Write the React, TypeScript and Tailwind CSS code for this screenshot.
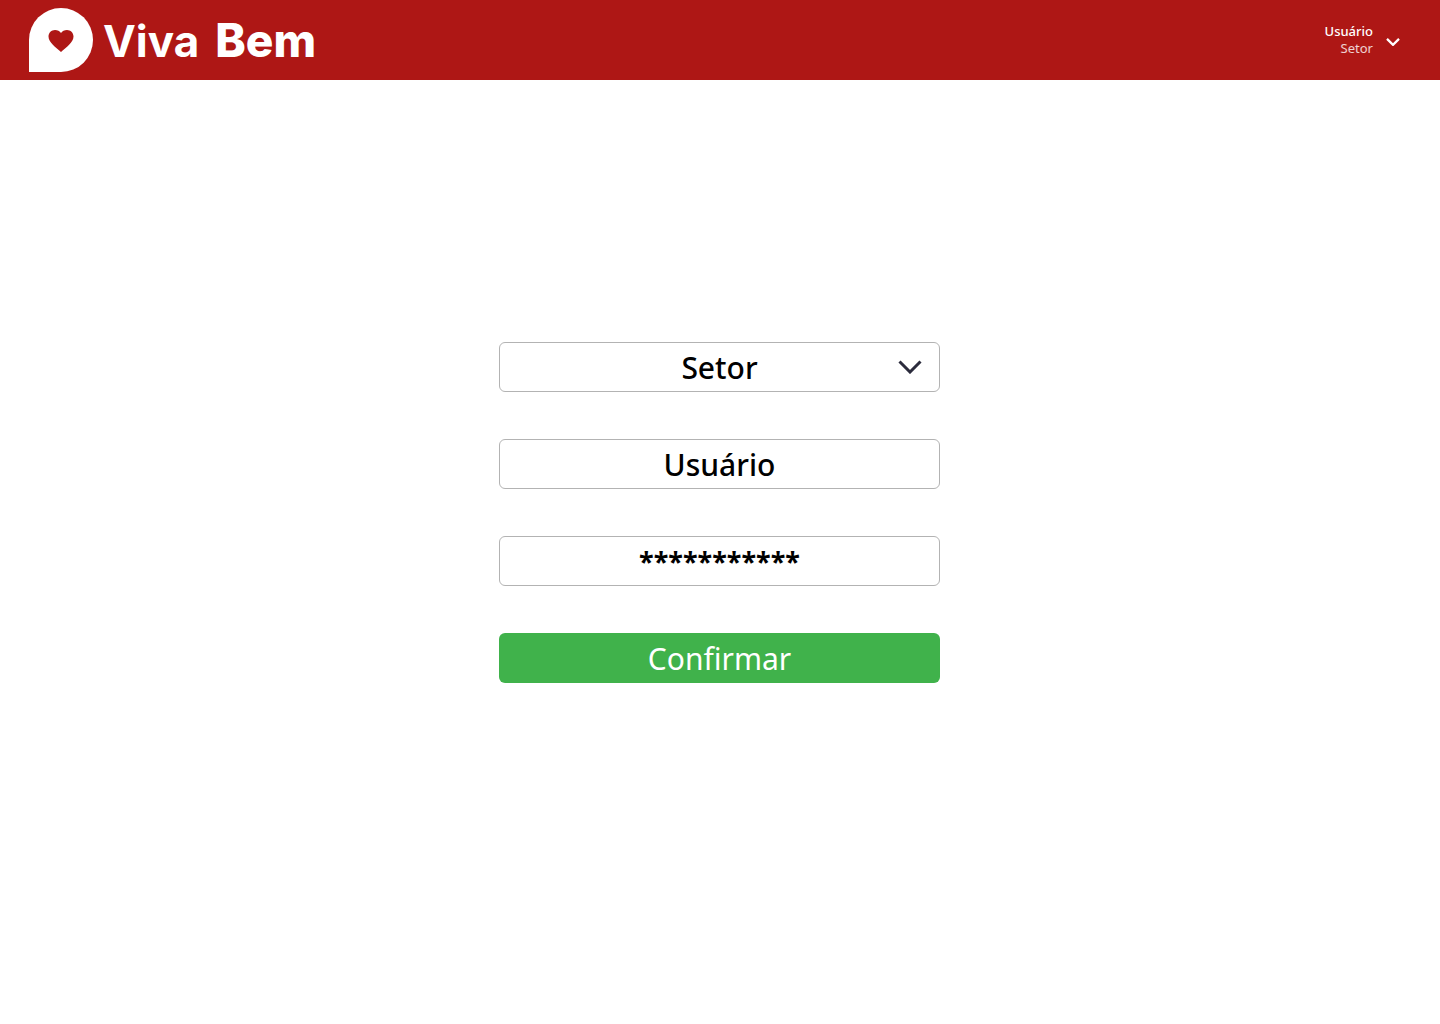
import { useState } from "react";

const fieldClass =
  "h-[50px] w-full rounded-md border border-[#b3b3b3] bg-white text-center text-black outline-none focus:border-gray-500";

function Logo() {
  return (
    <a href="#" aria-label="Viva Bem" className="flex items-center gap-[10px] text-white">
      <svg viewBox="0 0 64 64" className="size-16" aria-hidden="true">
        <path d="M0 64V32A32 32 0 1 1 32 64Z" fill="#fff" />
        <path
          d="M32 44C27 39.5 19.5 34.5 19.5 28.5C19.5 24.800 22.500 22 26 22C28.500 22 30.800 23.200 32 25C33.200 23.200 35.500 22 38 22C41.500 22 44.500 24.800 44.500 28.500C44.500 34.500 37 39.500 32 44Z"
          fill="#ae1715"
        />
      </svg>
      <span className="flex items-baseline gap-4 font-['Inter',sans-serif] leading-none">
        <span className="text-[44px] font-bold">Viva</span>
        <span className="text-[46px] font-extrabold">Bem</span>
      </span>
    </a>
  );
}

function Chevron({ className }: { className: string }) {
  return (
    <svg viewBox="0 0 24 14" fill="none" stroke="currentColor" className={className} aria-hidden="true">
      <path d="M1.500 1.500L12 12L22.500 1.500" />
    </svg>
  );
}

export default function App() {
  const [user, setUser] = useState("Usuário");
  const [password, setPassword] = useState("***********");

  return (
    <div className="flex min-h-screen flex-col bg-white font-['Noto_Sans',sans-serif]">
      <header className="flex h-20 items-center justify-between bg-[#ae1715] pr-10 pl-[29px]">
        <Logo />
        <button type="button" className="flex items-center gap-[13px] text-right text-white">
          <span className="flex flex-col">
            <span className="text-[13px] leading-[17px] font-medium">Usuário</span>
            <span className="text-[13px] leading-[17px] text-white/80">Setor</span>
          </span>
          <Chevron className="mt-[3px] h-2 w-[14px] stroke-[4]" />
        </button>
      </header>

      <main className="flex flex-1 items-center justify-center pr-[17px] pb-[79px] pl-4">
        <form
          className="flex w-full max-w-[441px] flex-col gap-[47px]"
          onSubmit={(event) => event.preventDefault()}
        >
          <div className="relative flex">
            <select
              aria-label="Setor"
              className={`${fieldClass} appearance-none px-10 pt-0.5 text-[30px] leading-[46px] font-medium [text-align-last:center]`}
            >
              <option>Setor</option>
            </select>
            <Chevron className="pointer-events-none absolute top-[18px] right-[18px] h-[14px] w-6 stroke-[3] text-[#2b2b3c]" />
          </div>
          <input
            aria-label="Usuário"
            type="text"
            value={user}
            onChange={(event) => setUser(event.target.value)}
            className={`${fieldClass} px-4 text-[30px] font-medium`}
          />
          <input
            aria-label="Senha"
            type="text"
            autoComplete="off"
            value={password}
            onChange={(event) => setPassword(event.target.value)}
            className={`${fieldClass} px-4 text-[27px] font-bold`}
          />
          <button
            type="submit"
            className="h-[50px] rounded-md bg-[#40b24b] pt-0.5 text-[30px] leading-[48px] text-white"
          >
            Confirmar
          </button>
        </form>
      </main>
    </div>
  );
}
